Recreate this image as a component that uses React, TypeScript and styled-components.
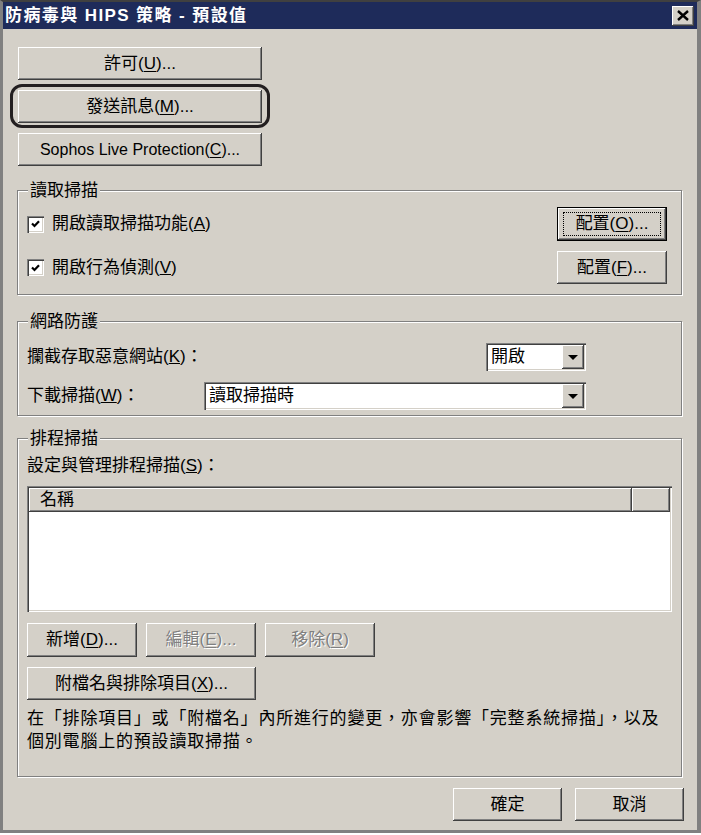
import React from 'react';
import styled, { createGlobalStyle, css } from 'styled-components';

const GlobalStyle = createGlobalStyle`
  html, body {
    margin: 0;
    padding: 0;
    background: #ffffff;
  }
  body {
    font-family: "Liberation Sans", "Noto Sans CJK TC", sans-serif;
    font-size: 17px;
    color: #000000;
  }
  * {
    box-sizing: border-box;
  }
`;

const raised = css`
  background: #d4d0c8;
  border: none;
  box-shadow:
    inset -1px -1px 0 #404040,
    inset 1px 1px 0 #ffffff,
    inset -2px -2px 0 #808080;
`;

const sunken = css`
  box-shadow:
    inset 1px 1px 0 #808080,
    inset 2px 2px 0 #404040,
    inset -1px -1px 0 #ffffff,
    inset -2px -2px 0 #d4d0c8;
`;

const Window = styled.div`
  width: 701px;
  height: 833px;
  background: #d4d0c8;
  border-top: 2px solid #404040;
  border-left: 3px solid #808080;
  border-right: 4px solid #808080;
  border-bottom: 3px solid #808080;
  display: flex;
  flex-direction: column;
`;

const TitleBar = styled.div`
  height: 27px;
  flex: none;
  background: #1e2b5a;
  display: flex;
  align-items: center;
  justify-content: space-between;
  padding: 0 3px 0 2px;
`;

const Title = styled.span`
  color: #ffffff;
  font-weight: bold;
  font-size: 17px;
  line-height: 27px;
  letter-spacing: 1.4px;
`;

const CloseButton = styled.span`
  ${raised};
  width: 22px;
  height: 20px;
  display: flex;
  align-items: center;
  justify-content: center;
`;

const Content = styled.div`
  flex: 1;
  display: flex;
  flex-direction: column;
  padding: 18px 14px 0 14px;
`;

const TopButtons = styled.div`
  display: flex;
  flex-direction: column;
  gap: 10px;
  width: 244px;
  margin-left: 1px;
`;

// the dark rounded ring drawn over the screenshot around one button
const Highlight = styled.div`
  position: relative;
  &::after {
    content: '';
    position: absolute;
    top: -6px;
    bottom: -5px;
    left: -8px;
    right: -8px;
    border: 3px solid #231f20;
    border-radius: 12px;
    pointer-events: none;
  }
`;

const Button = styled.button<{ $width?: number; $height?: number; $default?: boolean; $latin?: boolean }>`
  ${raised};
  width: ${(p) => (p.$width ? `${p.$width}px` : '100%')};
  height: ${(p) => p.$height ?? 33}px;
  padding: 0;
  font-family: inherit;
  font-size: ${(p) => (p.$latin ? '16px' : '17px')};
  color: #000000;
  display: flex;
  align-items: center;
  justify-content: center;
  line-height: 20px;
  ${(p) =>
    p.$default &&
    css`
      box-shadow:
        inset 0 0 0 1px #000000,
        inset -2px -2px 0 #404040,
        inset 2px 2px 0 #ffffff,
        inset -3px -3px 0 #808080;
    `}
  &:disabled {
    color: #808080;
    text-shadow: 1px 1px 0 #ffffff;
  }
  u {
    text-underline-offset: 2px;
  }
`;

const FocusRect = styled.span`
  flex: 1;
  align-self: stretch;
  margin: 5px 6px;
  border: 1px dotted #000000;
  display: flex;
  align-items: center;
  justify-content: center;
`;

const Group = styled.div<{ $gap: number; $padRight?: number }>`
  margin-top: ${(p) => p.$gap}px;
  border: 1px solid #808080;
  box-shadow: 1px 1px 0 #ffffff, inset 1px 1px 0 #ffffff;
  display: flex;
  flex-direction: column;
  padding: 0 ${(p) => p.$padRight ?? 14}px 0 9px;
  margin-right: 1px;
`;

const GroupTitle = styled.span`
  align-self: flex-start;
  margin: -11px 0 0 1px;
  padding: 0 2px;
  height: 21px;
  line-height: 21px;
  background: #d4d0c8;
`;

const CheckRow = styled.div<{ $top: number }>`
  margin-top: ${(p) => p.$top}px;
  display: flex;
  align-items: center;
  justify-content: space-between;
`;

const CheckLabel = styled.label`
  display: flex;
  align-items: center;
  gap: 8px;
  line-height: 20px;
`;

const CheckBox = styled.span`
  width: 17px;
  height: 17px;
  background: #ffffff;
  ${sunken};
  display: inline-flex;
  align-items: center;
  justify-content: center;
`;

const FieldRow = styled.div<{ $top: number }>`
  margin-top: ${(p) => p.$top}px;
  display: flex;
  align-items: center;
  line-height: 20px;
`;

const FieldLabel = styled.span<{ $width?: number }>`
  width: ${(p) => (p.$width ? `${p.$width}px` : 'auto')};
  flex: ${(p) => (p.$width ? 'none' : '1')};
`;

const Combo = styled.div<{ $width?: number }>`
  width: ${(p) => (p.$width ? `${p.$width}px` : 'auto')};
  flex: ${(p) => (p.$width ? 'none' : '1')};
  height: 28px;
  background: #ffffff;
  ${sunken};
  padding: 2px;
  display: flex;
  align-items: center;
`;

const ComboText = styled.span`
  flex: 1;
  padding-left: 3px;
  line-height: 24px;
`;

const ComboArrow = styled.span`
  ${raised};
  width: 22px;
  height: 24px;
  display: flex;
  align-items: center;
  justify-content: center;
`;

const ListView = styled.div`
  margin-top: 10px;
  height: 126px;
  background: #ffffff;
  ${sunken};
  padding: 2px;
  display: flex;
  flex-direction: column;
`;

const ListHeader = styled.div`
  display: flex;
  height: 24px;
`;

const HeaderCell = styled.span<{ $width?: number }>`
  ${raised};
  width: ${(p) => (p.$width ? `${p.$width}px` : 'auto')};
  flex: ${(p) => (p.$width ? 'none' : '1')};
  padding-left: 11px;
  line-height: 24px;
`;

const ButtonRow = styled.div<{ $top: number }>`
  margin-top: ${(p) => p.$top}px;
  display: flex;
  gap: 9px;
`;

const Note = styled.p`
  margin: 7px 0 0 0;
  line-height: 23px;
  letter-spacing: 0.8px;
`;

const Footer = styled.div`
  margin-top: 11px;
  display: flex;
  justify-content: flex-end;
  gap: 13px;
  margin-right: -1px;
`;

const CloseIcon = () => (
  <svg width="12" height="11" viewBox="0 0 12 11">
    <path d="M1 1 L11 10 M11 1 L1 10" stroke="#000" strokeWidth="2.4" />
  </svg>
);

const CheckIcon = () => (
  <svg width="9" height="8" viewBox="0 0 9 8">
    <polyline points="1,3.5 3.5,6 8,1.2" fill="none" stroke="#000" strokeWidth="2.2" />
  </svg>
);

const ArrowIcon = () => (
  <svg width="10" height="5" viewBox="0 0 10 5">
    <polygon points="0,0 10,0 5,5" fill="#000" />
  </svg>
);

const Check = ({ children }: { children: React.ReactNode }) => (
  <CheckLabel>
    <CheckBox>
      <CheckIcon />
    </CheckBox>
    <span>{children}</span>
  </CheckLabel>
);

const App = () => {
  return (
    <>
      <GlobalStyle />
      <Window>
        <TitleBar>
          <Title>防病毒與 HIPS 策略 - 預設值</Title>
          <CloseButton>
            <CloseIcon />
          </CloseButton>
        </TitleBar>

        <Content>
          <TopButtons>
            <Button>
              許可(<u>U</u>)...
            </Button>
            <Highlight>
              <Button>
                發送訊息(<u>M</u>)...
              </Button>
            </Highlight>
            <Button $latin>
              Sophos Live Protection(<u>C</u>)...
            </Button>
          </TopButtons>

          <Group $gap={24}>
            <GroupTitle>讀取掃描</GroupTitle>
            <CheckRow $top={6}>
              <Check>
                開啟讀取掃描功能(<u>A</u>)
              </Check>
              <Button $width={110} $height={34} $default>
                <FocusRect>
                  配置(<u>O</u>)...
                </FocusRect>
              </Button>
            </CheckRow>
            <CheckRow $top={10}>
              <Check>
                開啟行為偵測(<u>V</u>)
              </Check>
              <Button $width={110} $height={33}>
                配置(<u>F</u>)...
              </Button>
            </CheckRow>
            <div style={{ height: 10 }} />
          </Group>

          <Group $gap={26} $padRight={95}>
            <GroupTitle>網路防護</GroupTitle>
            <FieldRow $top={11}>
              <FieldLabel>
                攔截存取惡意網站(<u>K</u>)：
              </FieldLabel>
              <Combo $width={100}>
                <ComboText>開啟</ComboText>
                <ComboArrow>
                  <ArrowIcon />
                </ComboArrow>
              </Combo>
            </FieldRow>
            <FieldRow $top={11}>
              <FieldLabel $width={177}>
                下載掃描(<u>W</u>)：
              </FieldLabel>
              <Combo>
                <ComboText>讀取掃描時</ComboText>
                <ComboArrow>
                  <ArrowIcon />
                </ComboArrow>
              </Combo>
            </FieldRow>
            <div style={{ height: 5 }} />
          </Group>

          <Group $gap={22} $padRight={9}>
            <GroupTitle>排程掃描</GroupTitle>
            <FieldRow $top={7}>
              <FieldLabel>
                設定與管理排程掃描(<u>S</u>)：
              </FieldLabel>
            </FieldRow>
            <ListView>
              <ListHeader>
                <HeaderCell $width={603}>名稱</HeaderCell>
                <HeaderCell />
              </ListHeader>
            </ListView>
            <ButtonRow $top={11}>
              <Button $width={110} $height={34}>
                新增(<u>D</u>)...
              </Button>
              <Button $width={110} $height={34} disabled>
                編輯(<u>E</u>)...
              </Button>
              <Button $width={110} $height={34} disabled>
                移除(<u>R</u>)
              </Button>
            </ButtonRow>
            <ButtonRow $top={10}>
              <Button $width={229} $height={33}>
                附檔名與排除項目(<u>X</u>)...
              </Button>
            </ButtonRow>
            <Note>
              在「排除項目」或「附檔名」內所進行的變更，亦會影響「完整系統掃描」，以及
              <br />
              個別電腦上的預設讀取掃描。
            </Note>
            <div style={{ height: 23 }} />
          </Group>

          <Footer>
            <Button $width={109} $height={33}>
              確定
            </Button>
            <Button $width={109} $height={33}>
              取消
            </Button>
          </Footer>
        </Content>
      </Window>
    </>
  );
};

export default App;
